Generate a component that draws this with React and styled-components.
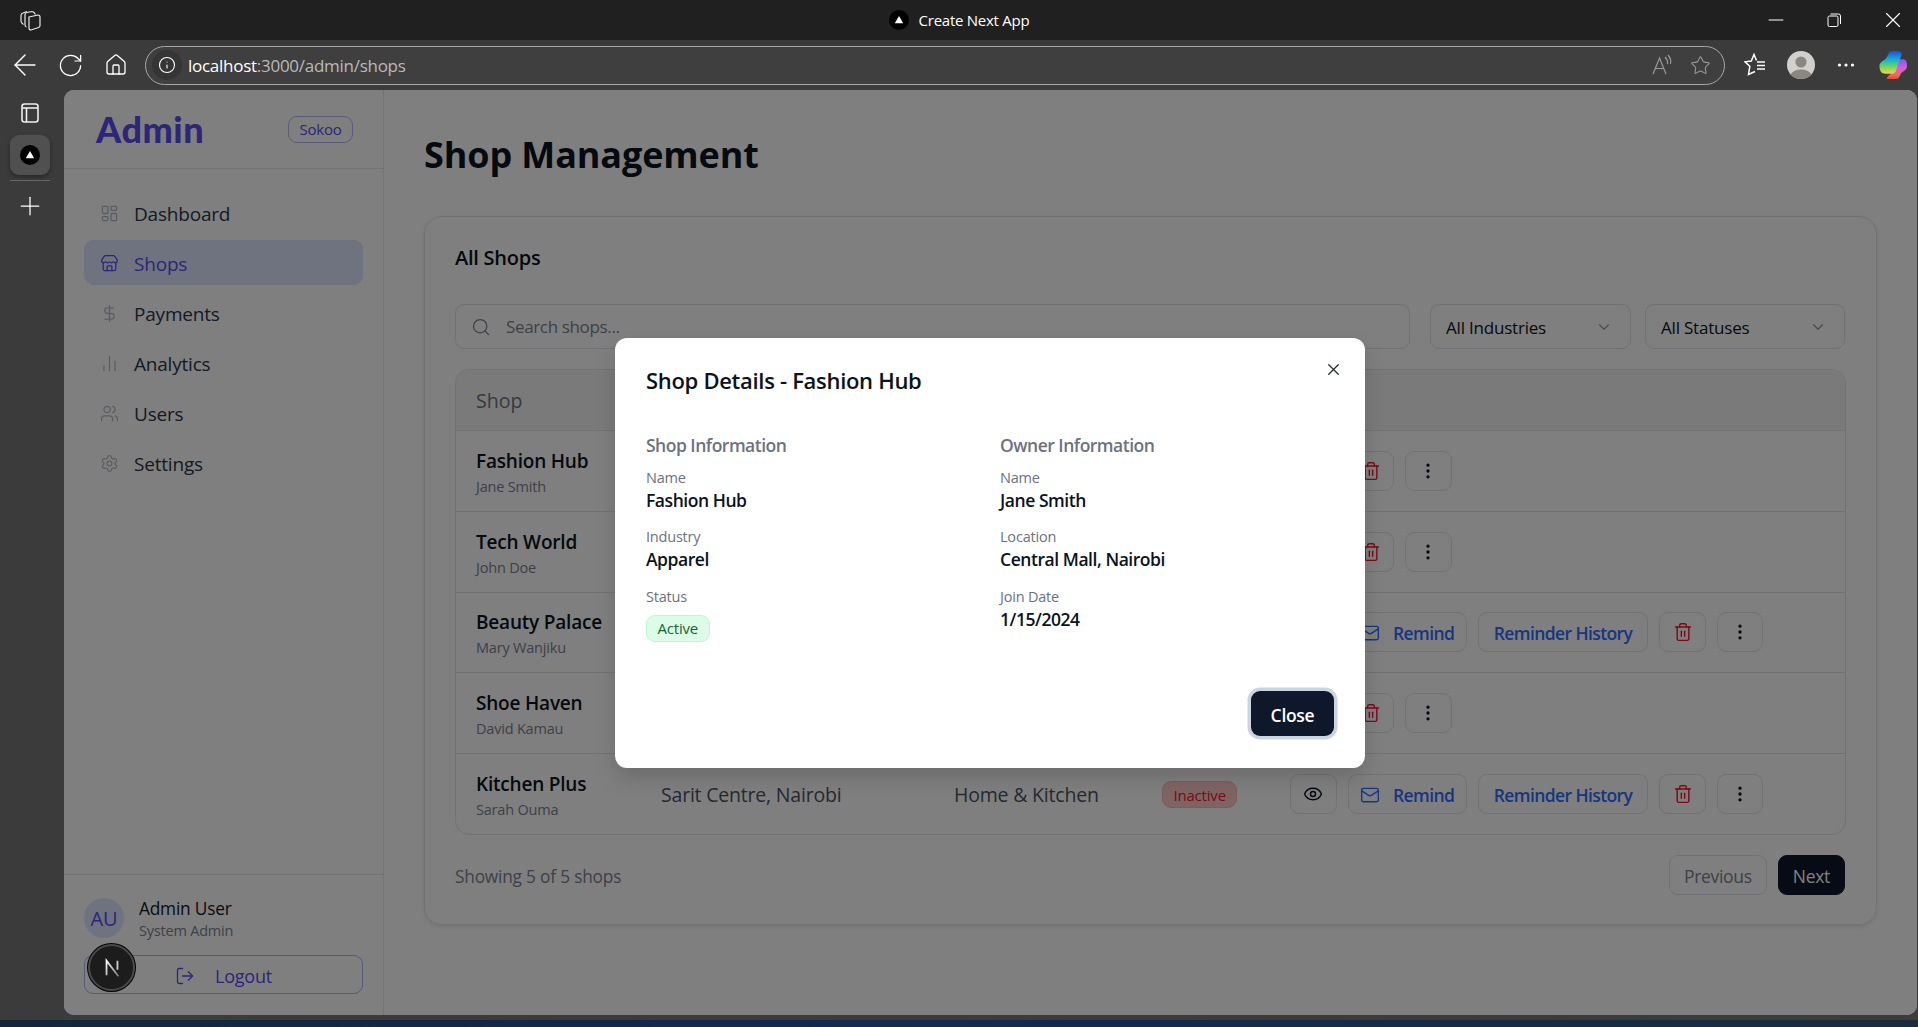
import React from "react";
import styled, { createGlobalStyle } from "styled-components";
import {
  ArrowLeft, RotateCw, Home, Info, Star, Plus, Minus, X, LayoutDashboard, Store, DollarSign,
  ChartNoAxesColumn, Users, Settings, LogOut, Search, ChevronDown, Eye, Mail, Trash2, EllipsisVertical,
} from "lucide-react";

const FONT = `"Open Sans", "Noto Sans", "Liberation Sans", sans-serif`;

// colours are picked so they land right once the dialog overlay dims them
const INDIGO = "#5a4cf0";
const BLUE = "#2f6cff";
const RED = "#f5142e";

const GlobalStyle = createGlobalStyle`
  html, body { margin: 0; padding: 0; height: 100%; background: #3b3b3b; overflow: hidden; }
  * { box-sizing: border-box; }
  body { font-family: ${FONT}; }
`;

const Screen = styled.div`
  width: 1918px;
  height: 1027px;
  display: flex;
  flex-direction: column;
  background: #3b3b3b;
  overflow: hidden;
`;

/* browser chrome */
const TitleBar = styled.div`
  height: 40px;
  flex: none;
  background: #202020;
  display: grid;
  grid-template-columns: 1fr auto 1fr;
  align-items: center;
  color: #fff;
`;
const TitleLeft = styled.div`
  padding-left: 20px;
  display: flex;
`;
const TitleCenter = styled.div`
  display: flex;
  align-items: center;
  gap: 10px;
  font-size: 15px;
  letter-spacing: -0.25px;
`;
const WindowControls = styled.div`
  display: flex;
  justify-content: flex-end;
  align-items: center;
  gap: 39px;
  padding-right: 12px;
`;
const Toolbar = styled.div`
  height: 50px;
  flex: none;
  display: flex;
  align-items: center;
  color: #fff;
  padding-left: 8px;
`;
const NavIcons = styled.div`
  display: flex;
  align-items: center;
  width: 137px;
  flex: none;
  svg:nth-child(2) { margin: 0 20px 0 15px; }
`;
const AddressBar = styled.div`
  width: 1580px;
  height: 39px;
  flex: none;
  border: 1.5px solid #a8a8a8;
  border-radius: 20px;
  background: #3f3f3f;
  display: flex;
  align-items: center;
  padding: 0 13px 0 6px;
`;
const InfoChip = styled.div`
  width: 30px;
  height: 30px;
  border-radius: 50%;
  background: #353535;
  display: grid;
  place-items: center;
  margin-right: 6px;
`;
const UrlText = styled.div`
  flex: 1;
  font-size: 17px;
  letter-spacing: -0.27px;
  color: #b9b9b9;
  b { font-weight: 400; color: #fff; }
`;
const AddressTools = styled.div`
  display: flex;
  align-items: center;
  gap: 16px;
  color: #9a9a9a;
`;
const ToolbarRight = styled.div`
  flex: 1;
  display: flex;
  align-items: center;
  padding-left: 19px;
  svg:nth-child(2) { margin: 0 22px 0 19px; }
  svg:nth-child(4) { margin-left: 24px; }
`;
const BrowserBody = styled.div`
  flex: 1;
  min-height: 0;
  display: flex;
`;
const Rail = styled.div`
  width: 64px;
  flex: none;
  padding: 13px 14px 0 10px;
  display: flex;
  flex-direction: column;
  align-items: center;
  color: #fff;
`;
const ActiveTab = styled.div`
  width: 40px;
  height: 40px;
  margin-top: 12px;
  border-radius: 9px;
  background: #505050;
  box-shadow: 0 2px 4px rgba(0, 0, 0, 0.35);
  display: grid;
  place-items: center;
`;
const RailDivider = styled.div`
  width: 40px;
  height: 1px;
  background: #686868;
  margin: 5px 0 10px;
`;
const Taskbar = styled.div`
  height: 7px;
  flex: none;
  margin-top: 5px;
  background: linear-gradient(90deg, #15263b 0%, #13294f 45%, #142a4a 65%, #1b2c3e 100%);
`;

/* the page inside the browser */
const Page = styled.div`
  flex: 1;
  position: relative;
  display: flex;
  background: #fff;
  border-radius: 10px;
  overflow: hidden;
  margin-right: 1px;
`;
const Sidebar = styled.aside`
  width: 320px;
  flex: none;
  display: flex;
  flex-direction: column;
  border-right: 1px solid #e5e7eb;
`;
const SideHeader = styled.div`
  height: 79px;
  flex: none;
  padding: 0 30px 0 32px;
  display: flex;
  align-items: center;
  justify-content: space-between;
  border-bottom: 1px solid #e5e7eb;
`;
const Logo = styled.div`
  font-family: "Lato", sans-serif;
  font-weight: 900;
  font-size: 36px;
  letter-spacing: 0.5px;
  color: ${INDIGO};
`;
const EnvBadge = styled.span`
  height: 27px;
  width: 65px;
  display: flex;
  align-items: center;
  justify-content: center;
  border: 1px solid #b6b8f8;
  border-radius: 9px;
  font-size: 15px;
  font-weight: 500;
  letter-spacing: -0.2px;
  color: ${INDIGO};
`;
const SideNav = styled.nav`
  flex: 1;
  padding: 21px 20px;
  display: flex;
  flex-direction: column;
  gap: 5px;
`;
const NavItem = styled.div`
  height: 45px;
  padding: 2px 0 0 16px;
  display: flex;
  align-items: center;
  gap: 15px;
  border-radius: 9px;
  font-size: 19px;
  font-weight: 500;
  letter-spacing: -0.2px;
  background: ${({ $active }) => ($active ? "#dde6ff" : "transparent")};
  color: ${({ $active }) => ($active ? INDIGO : "#2d3546")};
  svg { color: ${({ $active }) => ($active ? INDIGO : "#b4bac6")}; }
`;
const SideFooter = styled.div`
  height: 141px;
  flex: none;
  padding: 23px 20px 0;
  border-top: 1px solid #e5e7eb;
`;
const UserRow = styled.div`
  display: flex;
  align-items: flex-start;
  gap: 15px;
  margin-bottom: 13px;
`;
const Avatar = styled.div`
  width: 40px;
  height: 40px;
  border-radius: 50%;
  background: #dde6ff;
  color: ${INDIGO};
  display: grid;
  place-items: center;
  font-size: 20px;
`;
const UserName = styled.div`
  font-size: 17.3px;
  font-weight: 500;
  line-height: 22px;
  color: #111827;
  letter-spacing: -0.2px;
`;
const UserRole = styled.div`
  font-size: 14.5px;
  line-height: 22px;
  color: #7b8290;
  letter-spacing: -0.2px;
`;
const LogoutButton = styled.div`
  height: 39px;
  padding-top: 2px;
  border: 1px solid #a5b4fc;
  border-radius: 9px;
  display: flex;
  align-items: center;
  justify-content: center;
  gap: 20px;
  font-size: 18px;
  font-weight: 500;
  color: ${INDIGO};
  letter-spacing: -0.2px;
`;
const Main = styled.main`
  flex: 1;
  min-width: 0;
  padding: 0 40px;
`;
const PageTitle = styled.h1`
  margin: 0;
  height: 126px;
  display: flex;
  align-items: center;
  padding-top: 3px;
  font-size: 36px;
  font-weight: 700;
  color: #0b1220;
  letter-spacing: -0.12px;
`;
const Card = styled.section`
  width: 1453px;
  height: 709px;
  padding: 0 30px;
  border: 1px solid #e2e4ea;
  border-radius: 18px;
  box-shadow: 0 2px 4px rgba(0, 0, 0, 0.1);
`;
const CardTitle = styled.h2`
  margin: 0;
  height: 87px;
  display: flex;
  align-items: center;
  padding-bottom: 7px;
  font-size: 20px;
  font-weight: 600;
  color: #0b1220;
  letter-spacing: -0.25px;
`;
const Filters = styled.div`
  display: flex;
  gap: 20px;
  height: 45px;
`;
const SearchBox = styled.div`
  width: 955px;
  display: flex;
  align-items: center;
  gap: 15px;
  padding-left: 15px;
  border: 1px solid #e2e4ea;
  border-radius: 9px;
  font-size: 17px;
  color: #7b8290;
  letter-spacing: -0.35px;
`;
const SelectBox = styled.div`
  width: ${({ $tight }) => ($tight ? "200px" : "201px")};
  margin-left: ${({ $tight }) => ($tight ? "-6px" : "0")};
  display: flex;
  align-items: center;
  justify-content: space-between;
  padding: 1px 17px 0 15px;
  border: 1px solid #e2e4ea;
  border-radius: 9px;
  font-size: 17px;
  color: #0b1220;
  letter-spacing: -0.2px;
  svg { color: #8d93a0; }
`;
const Table = styled.div`
  margin-top: 20px;
  border: 1px solid #e2e4ea;
  border-radius: 14px;
  overflow: hidden;
`;
const HeaderRow = styled.div`
  height: 60px;
  padding-left: 20px;
  display: flex;
  align-items: center;
  font-size: 19.5px;
  font-weight: 500;
  color: #6b7280;
  background: #f5f5f5;
`;
const Row = styled.div`
  height: 80.8px;
  padding-left: 20px;
  display: grid;
  grid-template-columns: 185px 293px 208px 128px 1fr;
  align-items: center;
  border-top: 1px solid #e2e4ea;
  font-size: 19.5px;
  color: #4b5563;
  letter-spacing: -0.2px;
`;
const ShopCell = styled.div`
  padding-top: 7px;
`;
const ShopName = styled.div`
  font-size: 19px;
  line-height: 24px;
  font-weight: 600;
  color: #0b1220;
`;
const OwnerName = styled.div`
  font-size: 14.5px;
  line-height: 27px;
  color: #7b8290;
`;
const StatusBadge = styled.span`
  display: inline-flex;
  align-items: center;
  height: 27px;
  padding: 0 10.5px;
  border: 1px solid ${({ $active }) => ($active ? "#bbf7d0" : "#ffb8b8")};
  border-radius: 9px;
  background: ${({ $active }) => ($active ? "#dcfce7" : "#ffc8c8")};
  color: ${({ $active }) => ($active ? "#166534" : "#f01438")};
  font-size: 15px;
  font-weight: 500;
  letter-spacing: -0.2px;
`;
const Actions = styled.div`
  display: flex;
  gap: 11px;
`;
const ActionButton = styled.div`
  height: 40px;
  min-width: 46.5px;
  padding: ${({ $pad }) => $pad || "0"};
  display: flex;
  align-items: center;
  justify-content: center;
  gap: 13px;
  border: 1px solid #e2e4ea;
  border-radius: 9px;
  font-size: 17.5px;
  font-weight: 600;
  letter-spacing: -0.6px;
  color: ${({ $tone }) => ($tone === "blue" ? BLUE : $tone === "red" ? RED : "#0b1220")};
`;
const Footer = styled.div`
  margin-top: 20px;
  display: flex;
  align-items: center;
  justify-content: space-between;
`;
const Showing = styled.div`
  padding-top: 3px;
  font-size: 17.3px;
  color: #7b8290;
  letter-spacing: -0.2px;
`;
const Pager = styled.div`
  display: flex;
  gap: 11px;
  margin-right: 1px;
`;
const PagerButton = styled.div`
  height: 40px;
  padding: 2px 14px 0;
  display: flex;
  align-items: center;
  border: 1px solid ${({ $primary }) => ($primary ? "#0f172a" : "#e2e4ea")};
  border-radius: 9px;
  font-size: 17.5px;
  font-weight: 500;
  letter-spacing: -0.3px;
  background: ${({ $primary }) => ($primary ? "#0f172a" : "transparent")};
  color: ${({ $primary }) => ($primary ? "#fff" : "#7b8290")};
`;

/* next dev indicator sits over the sidebar */
const DevBadge = styled.div`
  position: absolute;
  left: 24px;
  bottom: 24px;
  width: 47px;
  height: 47px;
  border-radius: 50%;
  background: #1c1c1c;
  border: 2px solid #4a4a4a;
  box-shadow: 0 0 0 1px #000;
  display: grid;
  place-items: center;
  z-index: 60;
`;

/* dialog */
const Overlay = styled.div`
  position: absolute;
  inset: 0;
  background: rgba(0, 0, 0, 0.5);
  display: grid;
  place-items: center;
  z-index: 50;
`;
const Dialog = styled.div`
  position: relative;
  width: 750px;
  height: 430px;
  margin-right: 1px;
  padding: 29px 31px 31px;
  background: #fff;
  border-radius: 12px;
  box-shadow: 0 10px 20px rgba(0, 0, 0, 0.15);
  display: flex;
  flex-direction: column;
`;
const CloseX = styled.div`
  position: absolute;
  top: 22px;
  right: 22px;
  color: #1f2937;
  display: flex;
`;
const DialogTitle = styled.h3`
  margin: 0;
  font-size: 22px;
  line-height: 27px;
  font-weight: 600;
  color: #0b1220;
  letter-spacing: -0.3px;
`;
const DetailGrid = styled.div`
  margin-top: 39px;
  display: grid;
  grid-template-columns: 354px 1fr;
`;
const DetailColumn = styled.div`
  display: flex;
  flex-direction: column;
`;
const SectionHeading = styled.div`
  font-size: 17.5px;
  line-height: 24px;
  font-weight: 600;
  color: #6b7280;
  letter-spacing: -0.5px;
  margin-bottom: 11px;
`;
const Field = styled.div`
  height: 59.5px;
`;
const FieldLabel = styled.div`
  font-size: 14.5px;
  line-height: 20px;
  color: #6b7280;
  letter-spacing: -0.2px;
`;
const FieldValue = styled.div`
  font-size: 17.5px;
  line-height: 24px;
  font-weight: 600;
  color: #0b1220;
  letter-spacing: -0.45px;
`;
const DialogBadge = styled.div`
  display: flex;
  margin-top: 8px;
`;
const DialogFooter = styled.div`
  margin-top: auto;
  display: flex;
  justify-content: flex-end;
`;
const PrimaryButton = styled.div`
  width: 83px;
  height: 45px;
  margin-bottom: 1px;
  padding-top: 3px;
  border-radius: 9px;
  background: #0f172a;
  box-shadow: 0 0 0 3.5px #cbd5e1;
  color: #fff;
  display: flex;
  align-items: center;
  justify-content: center;
  font-size: 17.5px;
  font-weight: 600;
  letter-spacing: -0.3px;
`;

const WorkspacesIcon = () => (
  <svg width="21" height="21" viewBox="0 0 21 21" fill="none" stroke="#e8e8e8" strokeWidth="1.2">
    <path d="M9 7 L18 5 Q20 5 20 7 V15.5 Q20 17 18.5 17.5 L11 20 Q9 20 9 18 Z" />
    <path d="M6.5 17 Q5 16.5 5 15 V4.5 Q5 3 7 2.5 L12 1.5 Q14 1.5 15.5 4.5" />
    <path d="M3.5 14.5 Q1 13 1 11 V5.5 Q1 3.5 3 3 L7 1.5" />
  </svg>
);
const RestoreIcon = () => (
  <svg width="14" height="14" viewBox="0 0 14 14" fill="none" stroke="#fff" strokeWidth="1">
    <rect x="1" y="3" width="10" height="10.5" rx="1.5" />
    <path d="M3.5 1 H11.5 Q13.5 1 13.5 3 V11" />
  </svg>
);
const NextMark = ({ size = 20 }) => (
  <svg width={size} height={size} viewBox="0 0 20 20">
    <circle cx="10" cy="10" r="10" fill="#000" />
    <path d="M10 6 L14.2 13.2 H5.8 Z" fill="#fff" />
  </svg>
);
const TabsIcon = () => (
  <svg width="18" height="20" viewBox="0 0 18 20" fill="none" stroke="#eee" strokeWidth="1.6">
    <rect x="1" y="1" width="16" height="18" rx="2.5" />
    <path d="M1 5 H17" />
    <path d="M5.5 5 V19" />
  </svg>
);
const ReadAloudIcon = () => (
  <svg width="24" height="24" viewBox="0 0 24 24" fill="none" stroke="#9a9a9a" strokeWidth="1.2">
    <path d="M3 21 L9.5 5 L16 21 M5.3 15.5 H13.7" />
    <path d="M15 4 Q18 7 17.5 11" />
    <path d="M18 2 Q21.5 6 20.5 11" />
  </svg>
);
const FavoritesIcon = () => (
  <svg width="24" height="24" viewBox="0 0 24 24" fill="none" stroke="#fff" strokeWidth="1.5">
    <path d="M12.5 7.5 L10 1.5 L7.3 8 L1 8.8 L5.8 13.3 L4.5 21.5 L11 18.5" />
    <path d="M13 9 H21 M13 12.5 H21 M13 16 H21" />
  </svg>
);
const ProfileIcon = () => (
  <svg width="28" height="28" viewBox="0 0 28 28">
    <circle cx="14" cy="14" r="14" fill="#d2d0cc" />
    <circle cx="14" cy="11" r="5.6" fill="#8a8783" />
    <path d="M3.5 24 Q6 18.5 14 18.5 Q22 18.5 24.5 24 Q20 28 14 28 Q8 28 3.5 24 Z" fill="#8a8783" />
  </svg>
);
const DotsIcon = () => (
  <svg width="18" height="6" viewBox="0 0 18 6" fill="#fff">
    <circle cx="2.5" cy="3" r="1.6" />
    <circle cx="9" cy="3" r="1.6" />
    <circle cx="15.5" cy="3" r="1.6" />
  </svg>
);
const CopilotIcon = () => (
  <svg width="28" height="28" viewBox="0 0 27 27">
    <defs>
      <linearGradient id="cpA" x1="0" y1="0" x2="0" y2="1">
        <stop offset="0" stopColor="#1a4fd8" />
        <stop offset="0.35" stopColor="#18a8d8" />
        <stop offset="0.6" stopColor="#4dd07a" />
        <stop offset="1" stopColor="#f4d93a" />
      </linearGradient>
      <linearGradient id="cpB" x1="0" y1="0" x2="0" y2="1">
        <stop offset="0" stopColor="#7b5cf0" />
        <stop offset="0.45" stopColor="#d85ce0" />
        <stop offset="0.8" stopColor="#f06a5a" />
        <stop offset="1" stopColor="#f0442a" />
      </linearGradient>
    </defs>
    <path d="M20 8 H24 Q27 9 27 14 Q27 18 23 20 Q21 21 20 24 Q19 27 16 27 H9 Q7 27 8 25 Q12 22 13 18 Z" fill="url(#cpB)" />
    <path d="M10 1 Q11 0 13 0 H18 Q21 0 22 3 L16 20 Q15 22 12 22 H6 Q1 22 0.5 16 Q0 12 3 10 Q7 8 8 5 Z" fill="url(#cpA)" />
  </svg>
);
const LogoN = () => (
  <svg width="20" height="20" viewBox="0 0 22 22" fill="none" strokeWidth="2">
    <defs>
      <linearGradient id="nFade" x1="0" y1="0" x2="1" y2="1">
        <stop offset="0" stopColor="#fff" />
        <stop offset="1" stopColor="#777" />
      </linearGradient>
    </defs>
    <path d="M5 19 V3 L18 20" stroke="url(#nFade)" />
    <path d="M17 3 V13" stroke="#ccc" />
  </svg>
);

const navItems = [
  { label: "Dashboard", icon: LayoutDashboard },
  { label: "Shops", icon: Store, active: true },
  { label: "Payments", icon: DollarSign },
  { label: "Analytics", icon: ChartNoAxesColumn },
  { label: "Users", icon: Users },
  { label: "Settings", icon: Settings },
];

// rows 1-4 are mostly behind the dialog, only what shows through is filled in
const shops = [
  { name: "Fashion Hub", owner: "Jane Smith" },
  { name: "Tech World", owner: "John Doe" },
  { name: "Beauty Palace", owner: "Mary Wanjiku", remind: true },
  { name: "Shoe Haven", owner: "David Kamau" },
  { name: "Kitchen Plus", owner: "Sarah Ouma", location: "Sarit Centre, Nairobi", industry: "Home & Kitchen", inactive: true, remind: true },
];

const Detail = ({ label, children }) => (
  <Field>
    <FieldLabel>{label}</FieldLabel>
    <FieldValue>{children}</FieldValue>
  </Field>
);

export default function App() {
  return (
    <Screen>
      <GlobalStyle />
      <TitleBar>
        <TitleLeft><WorkspacesIcon /></TitleLeft>
        <TitleCenter><NextMark />Create Next App</TitleCenter>
        <WindowControls>
          <Minus size={24} strokeWidth={1} />
          <RestoreIcon />
          <X size={26} strokeWidth={1} />
        </WindowControls>
      </TitleBar>
      <Toolbar>
        <NavIcons>
          <ArrowLeft size={34} strokeWidth={1} />
          <RotateCw size={27} strokeWidth={1.1} />
          <Home size={24} strokeWidth={1.3} />
        </NavIcons>
        <AddressBar>
          <InfoChip><Info size={18} strokeWidth={1.5} /></InfoChip>
          <UrlText><b>localhost</b>:3000/admin/shops</UrlText>
          <AddressTools>
            <ReadAloudIcon />
            <Star size={21} strokeWidth={1.2} />
          </AddressTools>
        </AddressBar>
        <ToolbarRight>
          <FavoritesIcon />
          <ProfileIcon />
          <DotsIcon />
          <CopilotIcon />
        </ToolbarRight>
      </Toolbar>
      <BrowserBody>
        <Rail>
          <TabsIcon />
          <ActiveTab><NextMark /></ActiveTab>
          <RailDivider />
          <Plus size={30} strokeWidth={1} />
        </Rail>
        <Page>
          <Sidebar>
            <SideHeader>
              <Logo>Admin</Logo>
              <EnvBadge>Sokoo</EnvBadge>
            </SideHeader>
            <SideNav>
              {navItems.map(({ label, icon: Icon, active }) => (
                <NavItem key={label} $active={active}>
                  <Icon size={19} strokeWidth={1.6} />
                  {label}
                </NavItem>
              ))}
            </SideNav>
            <SideFooter>
              <UserRow>
                <Avatar>AU</Avatar>
                <div>
                  <UserName>Admin User</UserName>
                  <UserRole>System Admin</UserRole>
                </div>
              </UserRow>
              <LogoutButton>
                <LogOut size={20} strokeWidth={1.6} />
                Logout
              </LogoutButton>
            </SideFooter>
          </Sidebar>
          <Main>
            <PageTitle>Shop Management</PageTitle>
            <Card>
              <CardTitle>All Shops</CardTitle>
              <Filters>
                <SearchBox>
                  <Search size={20} strokeWidth={1.5} />
                  Search shops...
                </SearchBox>
                <SelectBox>All Industries<ChevronDown size={18} strokeWidth={1.5} /></SelectBox>
                <SelectBox $tight>All Statuses<ChevronDown size={18} strokeWidth={1.5} /></SelectBox>
              </Filters>
              <Table>
                <HeaderRow>Shop</HeaderRow>
                {shops.map((shop) => (
                  <Row key={shop.name}>
                    <ShopCell>
                      <ShopName>{shop.name}</ShopName>
                      <OwnerName>{shop.owner}</OwnerName>
                    </ShopCell>
                    <div>{shop.location}</div>
                    <div>{shop.industry}</div>
                    <div>{shop.inactive && <StatusBadge>Inactive</StatusBadge>}</div>
                    <Actions>
                      <ActionButton><Eye size={20} strokeWidth={1.7} /></ActionButton>
                      {shop.remind && (
                        <>
                          <ActionButton $pad="2px 11.5px 0" $tone="blue"><Mail size={20} strokeWidth={1.7} />Remind</ActionButton>
                          <ActionButton $pad="2px 15px 0" $tone="blue">Reminder History</ActionButton>
                        </>
                      )}
                      <ActionButton $tone="red"><Trash2 size={20} strokeWidth={1.7} /></ActionButton>
                      <ActionButton><EllipsisVertical size={20} strokeWidth={2} /></ActionButton>
                    </Actions>
                  </Row>
                ))}
              </Table>
              <Footer>
                <Showing>Showing 5 of 5 shops</Showing>
                <Pager>
                  <PagerButton>Previous</PagerButton>
                  <PagerButton $primary>Next</PagerButton>
                </Pager>
              </Footer>
            </Card>
          </Main>
          <DevBadge><LogoN /></DevBadge>
          <Overlay>
            <Dialog>
              <CloseX><X size={19} strokeWidth={1.6} /></CloseX>
              <DialogTitle>Shop Details - Fashion Hub</DialogTitle>
              <DetailGrid>
                <DetailColumn>
                  <SectionHeading>Shop Information</SectionHeading>
                  <Detail label="Name">Fashion Hub</Detail>
                  <Detail label="Industry">Apparel</Detail>
                  <Field>
                    <FieldLabel>Status</FieldLabel>
                    <DialogBadge><StatusBadge $active>Active</StatusBadge></DialogBadge>
                  </Field>
                </DetailColumn>
                <DetailColumn>
                  <SectionHeading>Owner Information</SectionHeading>
                  <Detail label="Name">Jane Smith</Detail>
                  <Detail label="Location">Central Mall, Nairobi</Detail>
                  <Detail label="Join Date">1/15/2024</Detail>
                </DetailColumn>
              </DetailGrid>
              <DialogFooter><PrimaryButton>Close</PrimaryButton></DialogFooter>
            </Dialog>
          </Overlay>
        </Page>
      </BrowserBody>
      <Taskbar />
    </Screen>
  );
}
